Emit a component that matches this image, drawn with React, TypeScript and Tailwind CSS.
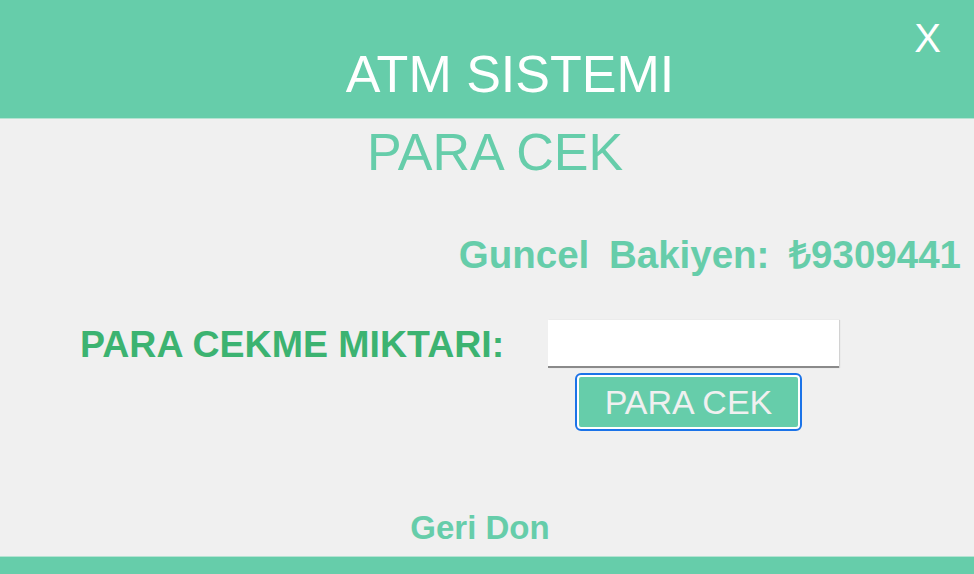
import React from "react";

export default function App() {
  return (
    <div
      className="relative w-[974px] h-[574px] overflow-hidden bg-[#f0f0f0] flex flex-col"
      style={{ fontFamily: '"Liberation Sans", Arial, sans-serif' }}
    >
      <header className="h-[119px] bg-[#66cdaa] border-b border-[#b5e3d2] flex justify-center pl-[46px] pt-[48px]">
        <h1 className="text-[52px] leading-none font-normal text-white">ATM SISTEMI</h1>
      </header>
      <button className="absolute right-[33px] top-[18px] text-[40px] leading-none text-white">X</button>

      <h2 className="mt-[7px] flex justify-center pl-[16px] text-[52px] leading-none font-normal text-[#66cdaa]">
        PARA CEK
      </h2>

      <div className="mt-[58px] flex justify-end pr-[13px]">
        <span className="text-[38.5px] leading-none font-bold text-[#66cdaa] [word-spacing:9px]">
          Guncel Bakiyen: ₺9309441
        </span>
      </div>

      <div className="mt-[45px] flex items-start">
        <div className="w-[548px] pl-[80px] pt-[6px]">
          <label className="text-[37.5px] leading-none font-bold text-[#3cb371]">PARA CEKME MIKTARI:</label>
        </div>
        <div className="flex flex-col">
          <input
            type="text"
            className="w-[291px] h-[48px] bg-white border-b-2 border-[#8a8a8a] shadow-[1px_0_1px_rgba(0,0,0,0.12)] outline-none"
          />
          <button className="mt-[7px] ml-[29px] w-[223px] h-[54px] bg-[#66cdaa] border-2 border-white rounded-[4px] outline-2 outline-[#1b73e8] text-[34px] leading-none text-[#f0f0f0]">
            PARA CEK
          </button>
        </div>
      </div>

      <div className="mt-[82px] flex justify-center pr-[14px]">
        <span className="text-[33px] leading-none font-bold text-[#66cdaa]">Geri Don</span>
      </div>

      <div className="mt-auto h-[18px] bg-[#66cdaa] border-t border-[#b5e3d2]" />
    </div>
  );
}
